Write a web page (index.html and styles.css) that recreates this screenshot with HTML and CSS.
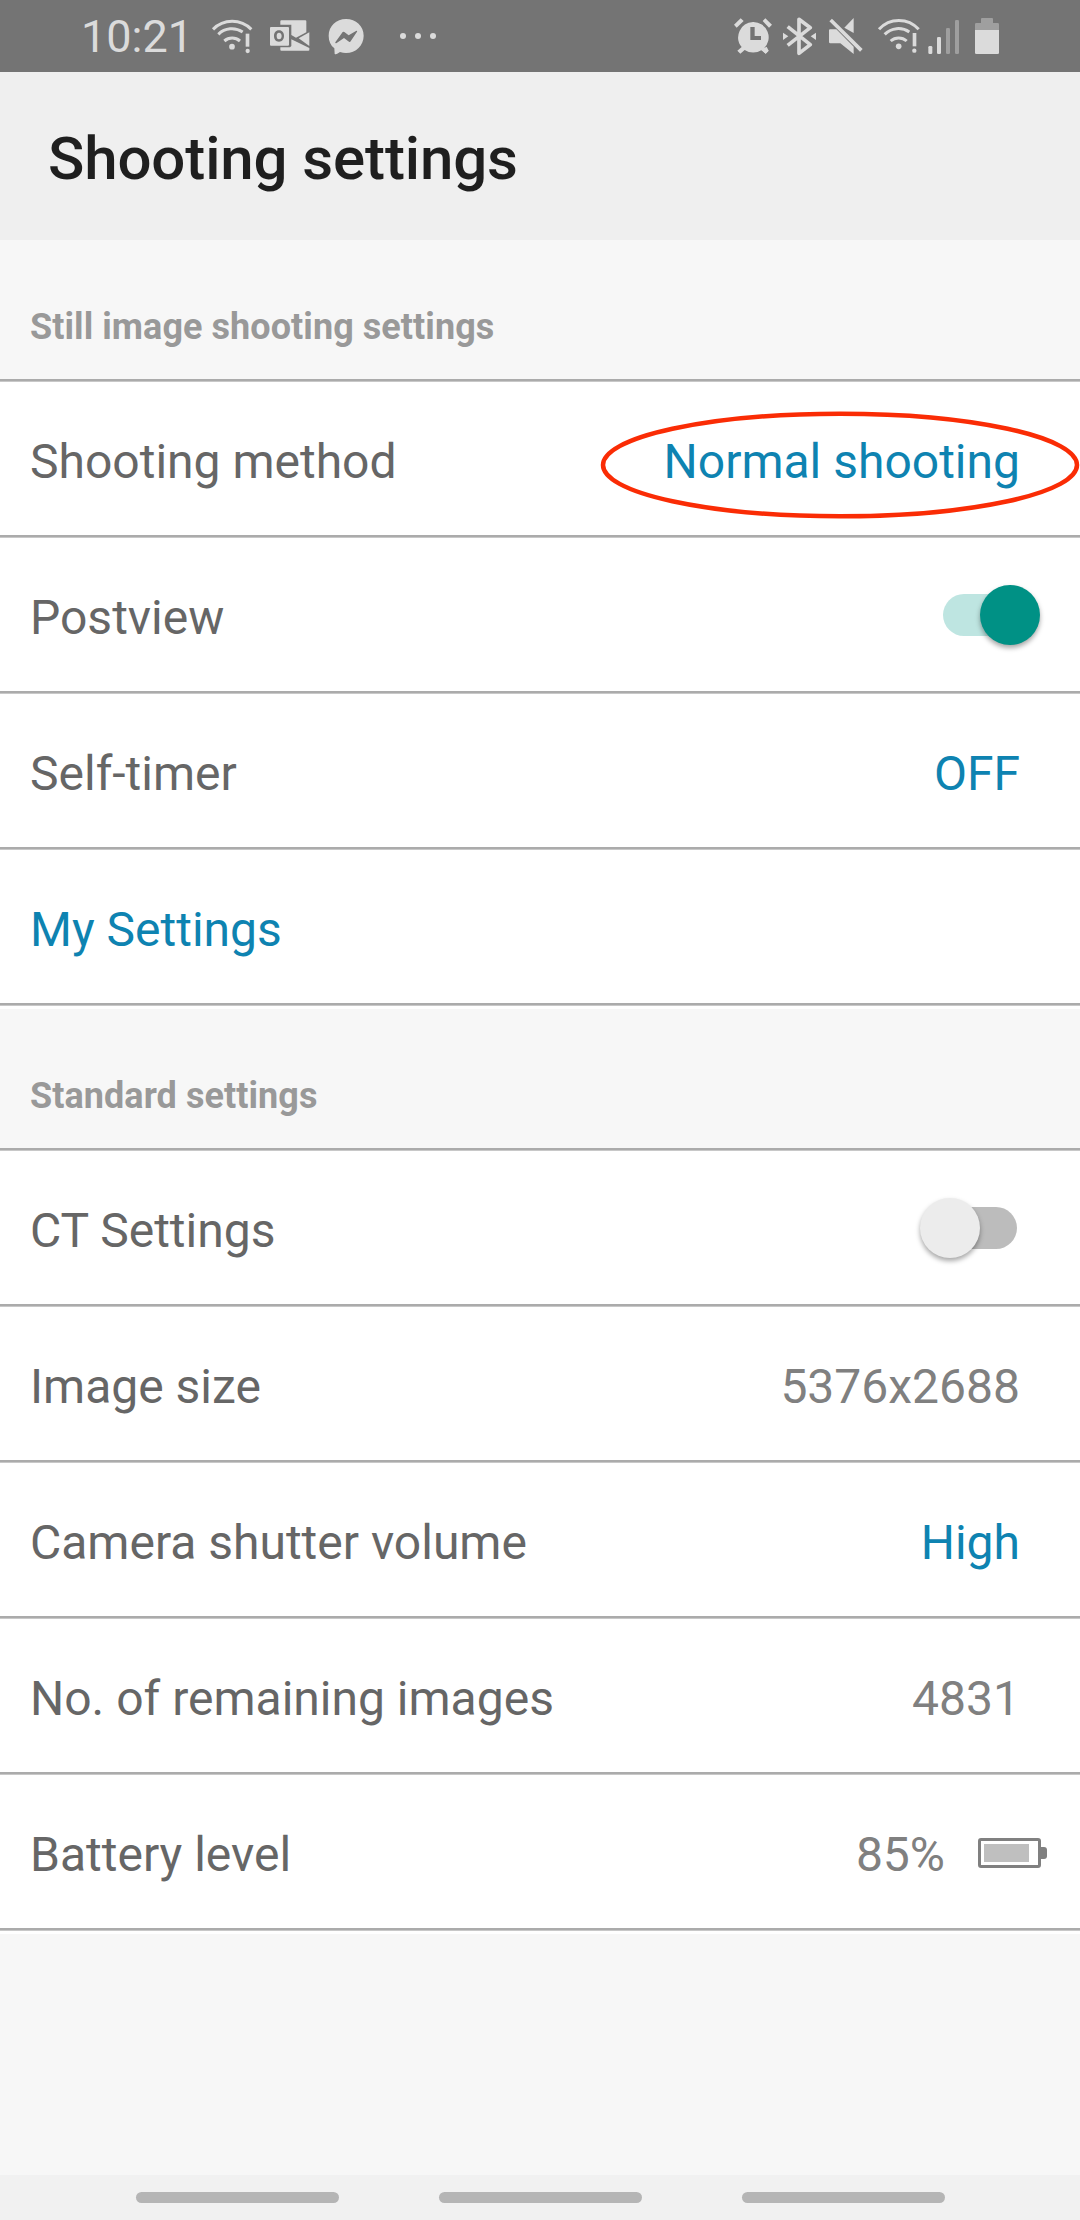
FILE: index.html
```
<!DOCTYPE html>
<html lang="en">

<head>
    <meta charset="UTF-8">
    <meta name="viewport" content="width=device-width, initial-scale=1.0">
    <title>Shooting settings</title>
    <link rel="stylesheet" href="styles.css">
</head>

<body>
    <!-- status bar -->
    <div class="statusbar">
        <span class="clock">10:21</span>
        <div class="icons notifications">
            <svg class="wifi" width="42" height="36" viewBox="0 0 126 108">
                <path class="line" d="M6 34A80 80 0 0 1 121 34M22 49A58 58 0 0 1 95 42M40 69A36 36 0 0 1 87 69" />
                <circle cx="63" cy="86" r="8.5" />
                <rect x="104" y="47" width="11" height="39" />
                <circle cx="110" cy="99" r="6.5" />
            </svg>
            <svg class="outlook" width="40" height="36" viewBox="0 0 120 108">
                <path d="M34 7H106Q109 7 109 10V43L78 59L64 51V20H31V10Q31 7 34 7Z" />
                <path d="M118 43V84L86 61Z" />
                <path d="M31 88H60L64 84V64L118 90V96Q118 98 115 98H34Q31 98 31 95Z" />
                <path fill-rule="evenodd" d="M3 27H54Q57 27 57 30V80Q57 83 54 83H3Q0 83 0 80V30Q0 27 3 27ZM27 37C17 37 12 45 12 54S17 71 27 71S42 63 42 54S37 37 27 37ZM27 44C32 44 35 48 35 54S32 64 27 64S20 60 20 54S22 44 27 44Z" />
            </svg>
            <svg class="messenger" width="37" height="36" viewBox="0 0 111 108">
                <path fill-rule="evenodd" d="M54 3C25 3 2 25 2 53C2 70 8 82 19 91L20 108C25 110 30 106 36 102C42 104 48 105 54 105C84 105 107 82 107 53C107 25 84 3 54 3ZM22 73L44 42Q46 40 49 42L62 52L84 39Q89 37 87 41L68 70Q66 73 63 71L48 60L26 75Q21 77 22 73Z" />
            </svg>
            <svg class="more" width="36" height="36" viewBox="0 0 108 108">
                <circle cx="9" cy="54" r="9" />
                <circle cx="54" cy="54" r="9" />
                <circle cx="99" cy="54" r="9" />
            </svg>
        </div>
        <div class="icons system">
            <svg class="alarm" width="38" height="36" viewBox="0 0 114 108">
                <path fill-rule="evenodd" d="M57 12A46 46 0 0 1 89 92L104 98L95 107L83 96A46 46 0 0 1 32 96L19 107L10 98L23 87A46 46 0 0 1 57 12ZM49 27V66H81V54H62V27Z" />
                <path d="M98 86L104 98L95 107L80 95ZM0 20L20 1L29 9L8 29ZM86 9L94 1L114 20L105 29Z" />
            </svg>
            <svg class="bluetooth" width="33" height="36" viewBox="0 0 99 108">
                <path class="thick" d="M14 26L82 80L48 106V4L82 29L14 82" />
                <path d="M0 44L16 55L0 66ZM99 44L83 55L99 66Z" />
            </svg>
            <svg class="mute" width="34" height="36" viewBox="0 0 102 108">
                <path d="M2 34H22L74 86V108L34 76H4Q0 76 0 72V36ZM74 0V45L46 29Z" />
                <path class="slash" d="M5 6L97 97" />
            </svg>
            <svg class="wifi" width="42" height="36" viewBox="0 0 126 108">
                <path class="line" d="M6 34A80 80 0 0 1 125 34M23 49A58 58 0 0 1 97 42M41 69A36 36 0 0 1 89 69" />
                <circle cx="65" cy="85" r="8.5" />
                <rect x="107" y="45" width="11" height="40" />
                <circle cx="112" cy="98" r="6.5" />
            </svg>
            <svg class="signal" width="31" height="36" viewBox="0 0 93 108">
                <rect x="1" y="84" width="12" height="24" rx="4" />
                <rect x="27" y="57" width="12" height="51" rx="4" />
                <rect class="dim" x="54" y="30" width="12" height="78" rx="4" />
                <rect class="dim" x="81" y="6" width="12" height="102" rx="4" />
            </svg>
            <svg class="power" width="24" height="36" viewBox="0 0 72 108">
                <path class="dim" d="M18 15V3Q18 0 21 0H51Q54 0 54 3V15H68Q72 15 72 19V36H0V19Q0 15 4 15Z" />
                <path d="M0 36H72V104Q72 108 68 108H4Q0 108 0 104Z" />
            </svg>
        </div>
    </div>

    <h1 class="title">Shooting settings</h1>

    <h2 class="section">Still image shooting settings</h2>
    <div class="list">
        <div class="row">
            <span class="label">Shooting method</span>
            <span class="value link">Normal shooting</span>
            <svg class="marker" width="480" height="110" viewBox="0 0 480 110">
                <ellipse cx="240" cy="55" rx="237" ry="51.3" />
            </svg>
        </div>
        <div class="row">
            <span class="label">Postview</span>
            <div class="switch on"><div class="knob"></div></div>
        </div>
        <div class="row">
            <span class="label">Self-timer</span>
            <span class="value link">OFF</span>
        </div>
        <div class="row">
            <span class="label link">My Settings</span>
        </div>
    </div>

    <h2 class="section">Standard settings</h2>
    <div class="list">
        <div class="row">
            <span class="label">CT Settings</span>
            <div class="switch"><div class="knob"></div></div>
        </div>
        <div class="row">
            <span class="label">Image size</span>
            <span class="value">5376x2688</span>
        </div>
        <div class="row">
            <span class="label">Camera shutter volume</span>
            <span class="value link">High</span>
        </div>
        <div class="row">
            <span class="label">No. of remaining images</span>
            <span class="value">4831</span>
        </div>
        <div class="row battery-row">
            <span class="label">Battery level</span>
            <span class="value">85%</span>
            <svg class="battery" width="69" height="30" viewBox="0 0 69 30">
                <rect class="case" x="1.5" y="1.5" width="60" height="27" rx="1.5" />
                <rect class="level" x="6" y="6" width="45" height="18" />
                <path d="M63 9H66Q69 9 69 12V18Q69 21 66 21H63Z" />
            </svg>
        </div>
    </div>

    <!-- navigation bar -->
    <div class="navbar">
        <div class="pill"></div>
        <div class="pill"></div>
        <div class="pill"></div>
    </div>
</body>

</html>
```
FILE: styles.css
```
* {
    padding: 0;
    margin: 0;
    box-sizing: border-box;
}

body {
    display: flex;
    flex-direction: column;
    height: 2220px;
    background-color: #f7f7f7;
    font-family: Roboto, sans-serif;
    overflow: hidden;
}

/* status bar */
.statusbar {
    display: flex;
    align-items: center;
    height: 72px;
    padding: 0 81px 0 81px;
    background-color: #747474;
    color: #dbdbdb;
}

.clock {
    width: 130px;
    font-size: 45px;
    line-height: 72px;
    padding-top: 2px;
}

.icons {
    display: flex;
    align-items: center;
}

.icons svg {
    display: block;
    fill: #dbdbdb;
    overflow: visible;
}

.icons .line {
    fill: none;
    stroke: #dbdbdb;
    stroke-width: 9;
}

.icons .thick {
    fill: none;
    stroke: #dbdbdb;
    stroke-width: 11;
    stroke-linejoin: round;
}

.icons .slash {
    stroke: #dbdbdb;
    stroke-width: 11;
}

.icons .dim {
    fill: #9f9f9f;
}

.outlook {
    margin-left: 17px;
}

.messenger {
    margin-left: 18px;
}

.more {
    margin-left: 35px;
}

.system {
    margin-left: auto;
}

.bluetooth {
    margin-left: 11px;
}

.mute {
    margin-left: 13px;
}

.system .wifi {
    margin-left: 14px;
}

.signal {
    margin-left: 9px;
}

.power {
    margin-left: 16px;
}

/* headings */
.title {
    height: 168px;
    padding: 3px 48px 0;
    background-color: #efefef;
    color: #1f1f1f;
    font-size: 60px;
    font-weight: 500;
    letter-spacing: -0.12px;
    line-height: 168px;
}

.section {
    height: 139px;
    padding: 35px 30px 0;
    color: #999;
    font-size: 36px;
    font-weight: 700;
    letter-spacing: 0.06px;
    line-height: 104px;
}

/* settings rows */
.list {
    margin-bottom: 4px;
    background-color: #fff;
    border-bottom: 2px solid #ababab;
    box-shadow: 0 1px 0 #c8c8c8, 0 4px 0 #fff;
}

.row {
    position: relative;
    display: flex;
    align-items: center;
    height: 156px;
    padding: 1px 60px 0 30px;
    border-top: 2px solid #ababab;
    box-shadow: inset 0 1px 0 #c8c8c8;
    font-size: 48px;
    color: #666;
}

.label,
.value {
    padding-top: 6px;
}

.value {
    margin-left: auto;
    color: #808080;
}

.link {
    color: #0e83b1;
}

.marker {
    position: absolute;
    top: 29px;
    right: 0;
    fill: none;
    stroke: #fa2c05;
    stroke-width: 4.5;
}

.switch {
    display: flex;
    align-items: center;
    width: 74px;
    height: 42px;
    margin-left: auto;
    margin-right: 3px;
    border-radius: 21px;
    background-color: #bcbcbc;
}

.knob {
    flex: none;
    width: 60px;
    height: 60px;
    margin-left: -23px;
    border-radius: 50%;
    background-color: #ececec;
    box-shadow: 0 3px 5px rgba(0, 0, 0, 0.35);
}

.switch.on {
    background-color: #bee5e1;
}

.switch.on .knob {
    margin-left: 37px;
    background-color: #009185;
}

.battery-row {
    padding-right: 33px;
}

.battery {
    margin-left: 33px;
    margin-top: 3px;
    fill: #808080;
}

.battery .case {
    fill: none;
    stroke: #808080;
    stroke-width: 3;
}

.battery .level {
    fill: #bfbfbf;
}

/* navigation bar */
.navbar {
    display: flex;
    justify-content: center;
    align-items: center;
    gap: 100px;
    height: 45px;
    margin-top: auto;
    background-color: #f1f1f1;
}

.pill {
    width: 203px;
    height: 11px;
    border-radius: 6px;
    background-color: #b5b5b5;
}
```
